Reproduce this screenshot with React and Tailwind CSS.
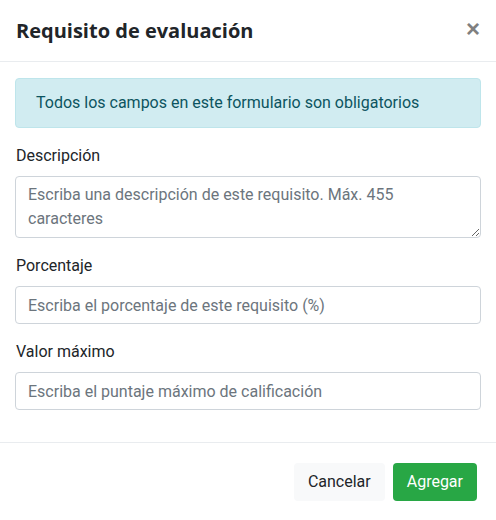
import React from "react";

export default function App() {
  return (
    <div className="w-[496px] h-[520px] bg-white flex flex-col" style={{ fontFamily: "Roboto, 'Liberation Sans', sans-serif" }}>
      <div className="h-[62px] border-b border-[#e9ecef] flex items-center justify-between pl-4 pr-4 shrink-0">
        <h5 className="text-[20px] font-bold text-[#212529] leading-none" style={{ fontFamily: "'Open Sans', sans-serif" }}>
          Requisito de evaluación
        </h5>
        <span className="text-[24px] font-bold text-[#808080] leading-none -mt-1" style={{ fontFamily: "'Liberation Sans', sans-serif" }}>×</span>
      </div>
      <div className="px-[15px] pt-4 flex flex-col">
        <div className="bg-[#d1ecf1] border border-[#bee5eb] rounded text-[#0c5460] px-5 py-3 text-[16px] leading-6 mb-4">
          Todos los campos en este formulario son obligatorios
        </div>
        <div className="mb-4 flex flex-col">
          <label className="text-[16px] leading-6 text-[#212529] mb-2 pl-px">Descripción</label>
          <textarea
            rows={2}
            placeholder="Escriba una descripción de este requisito. Máx. 455 caracteres"
            className="border border-[#ced4da] rounded px-3 py-1.5 text-[16px] leading-6 text-[#495057] placeholder:text-[#6c757d] outline-none"
          />
        </div>
        <div className="mb-4 flex flex-col">
          <label className="text-[16px] leading-6 text-[#212529] mb-2 pl-px">Porcentaje</label>
          <input
            placeholder="Escriba el porcentaje de este requisito (%)"
            className="h-[38px] border border-[#ced4da] rounded px-3 text-[16px] text-[#495057] placeholder:text-[#6c757d] outline-none"
          />
        </div>
        <div className="mb-4 flex flex-col">
          <label className="text-[16px] leading-6 text-[#212529] mb-2 pl-px">Valor máximo</label>
          <input
            placeholder="Escriba el puntaje máximo de calificación"
            className="h-[38px] border border-[#ced4da] rounded px-3 text-[16px] text-[#495057] placeholder:text-[#6c757d] outline-none"
          />
        </div>
      </div>
      <div className="mt-4 border-t border-[#e9ecef] flex justify-end gap-2 pt-5 pr-[19px]">
        <button className="h-[38px] px-[14px] rounded bg-[#f8f9fa] text-[#212529] text-[16px]">Cancelar</button>
        <button className="h-[38px] px-[14px] rounded bg-[#28a745] text-white text-[16px]">Agregar</button>
      </div>
    </div>
  );
}
